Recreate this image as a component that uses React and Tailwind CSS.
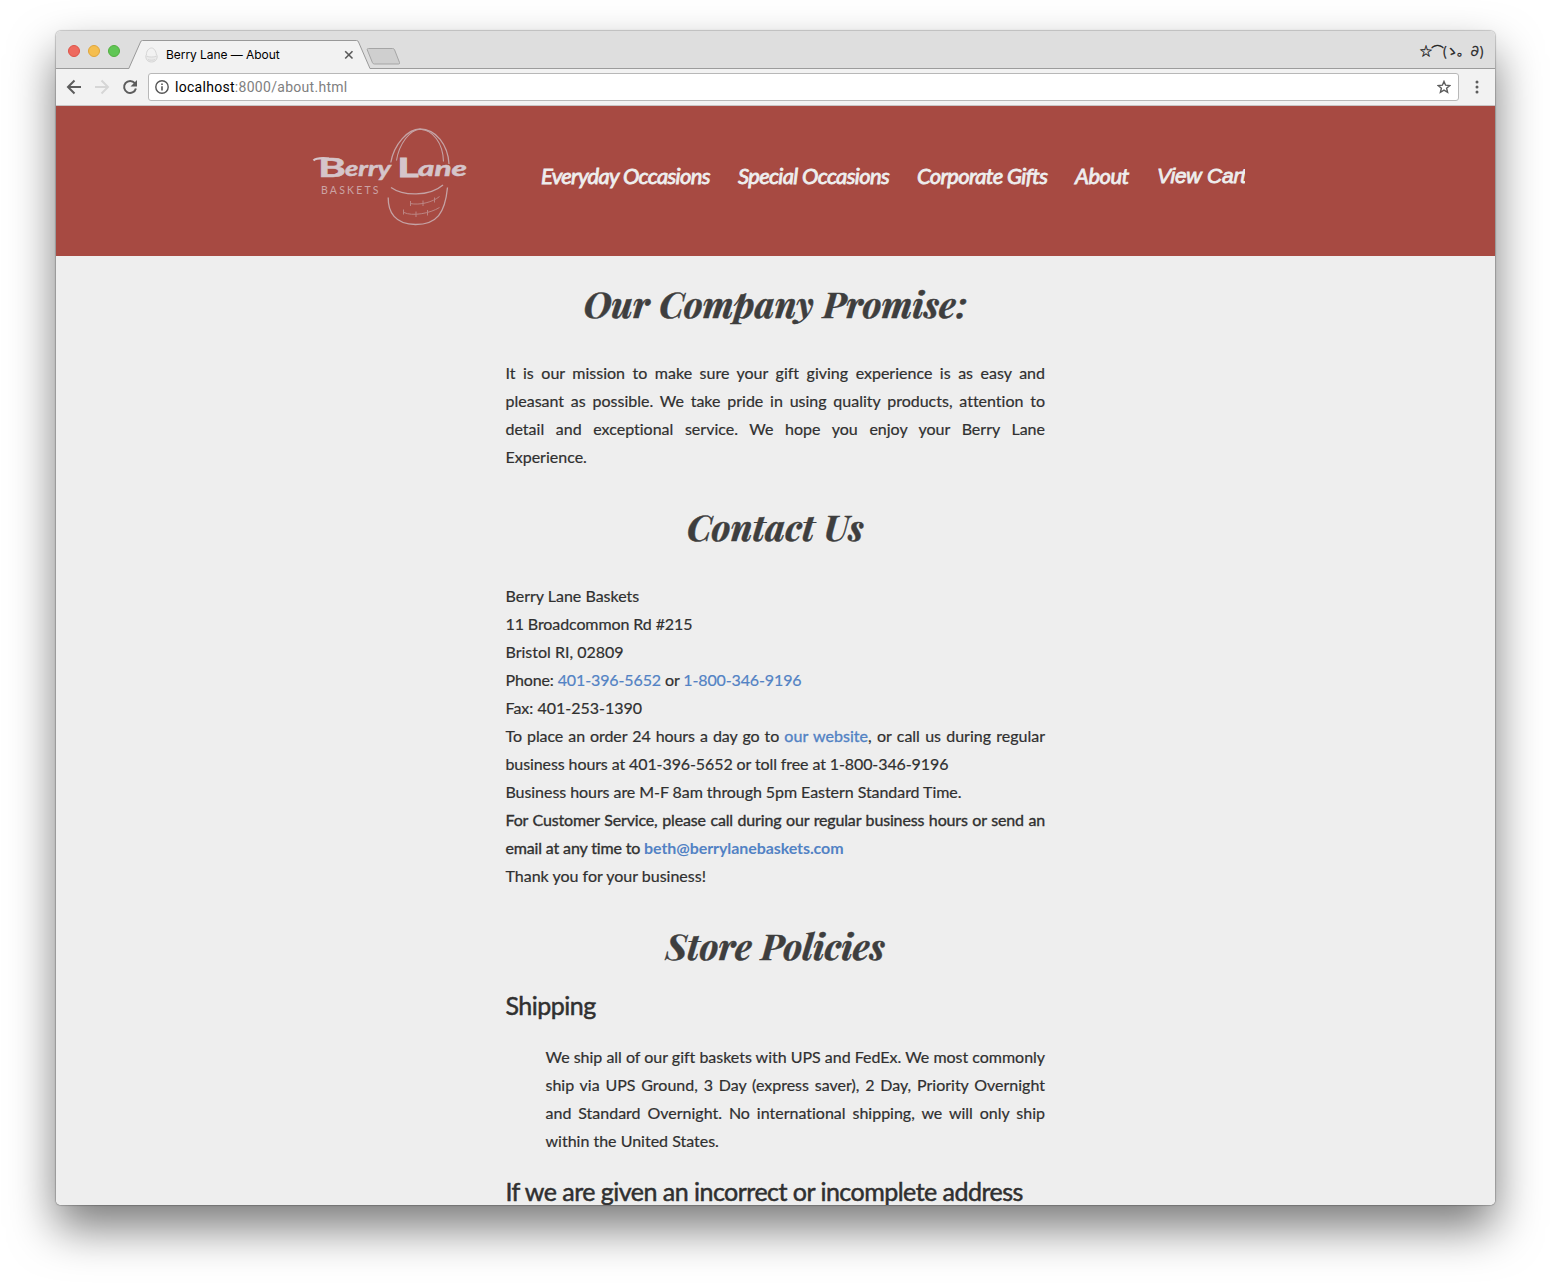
import React from "react";

const blue = "text-[#5282c4]";

function TitleBar() {
  return (
    <div className="relative flex h-[38px] items-start rounded-t-[5px] border-b border-[#9c9c9c] bg-[#dedede]">
      <div className="ml-3 mt-[14px] flex gap-2">
        <span className="size-3 rounded-full border border-[#de5347] bg-[#ee6a5f]" />
        <span className="size-3 rounded-full border border-[#e0a53a] bg-[#f5be4f]" />
        <span className="size-3 rounded-full border border-[#52ae3f] bg-[#60c655]" />
      </div>
      <div className="relative ml-2 h-[38px] w-[244px]">
        <svg className="absolute left-0 top-[9px]" width="244" height="29" viewBox="0 0 244 29" fill="none">
          <path d="M0 28.5 L1 28.5 L12.5 2 Q13 .5 14.5 .5 H228.500 Q230 .5 230.500 2 L242 28.500 L244 28.500 V29 H0Z" fill="#f2f2f2" />
          <path d="M0 28.5 H.8 L12.5 2 Q13 .5 14.5 .5 H228.500 Q230 .5 230.500 2 L242 28.500 H244" stroke="#999" />
        </svg>
        <div className="relative mt-[16px] flex h-4 items-center">
          <svg className="ml-[17px] mr-[8px]" width="13" height="16" viewBox="0 0 13 16" fill="none" stroke="#d6d6d6">
            <path d="M1.500 8C1 4 4 1 6.500 1S11 4 11.500 8" />
            <path d="M.8 8.500C3 10.500 10 10.500 12.200 8.500C12.500 12 10.500 15 6.500 15S.5 12 .8 8.500Z" fill="#eaeaea" />
            <path d="M3 12.500C5 13.500 8 13.500 10 12.500" />
          </svg>
          <span className="w-[178px] whitespace-nowrap font-[Inter] text-[12px] leading-4 tracking-[-0.05px] text-black">Berry Lane — About</span>
          <svg width="10" height="10" viewBox="0 0 10 10" stroke="#5a5a5a" strokeWidth="1.6">
            <path d="M1.200 1.200L8.500 8.500M8.500 1.200L1.200 8.500" />
          </svg>
        </div>
      </div>
      <svg className="-ml-[6px] mt-[16px]" width="36" height="18" viewBox="0 0 36 18">
        <path d="M2.500 1.500H26.500Q28 1.500 28.500 2.700L33.500 15.500Q34 17 32.500 17H8.500Q7 17 6.500 15.800L1.200 2.700Q1 1.500 2.500 1.500Z" fill="#cfcfcf" stroke="#a5a5a5" />
      </svg>
      <span className="ml-auto mr-[12px] mt-[12px] whitespace-nowrap text-[12.5px] leading-4 tracking-[-1.1px] text-[#222] [-webkit-text-stroke:0.3px_#222] font-['Noto_Sans_CJK_JP',sans-serif]">
        ☆⌒(ゝ。∂)
      </span>
    </div>
  );
}

function Toolbar() {
  return (
    <div className="flex h-[37px] items-center border-b border-[#c9c4c4] bg-[#f2f2f2]">
      <svg className="ml-[10px]" width="16" height="16" viewBox="0 0 16 16" fill="none" stroke="#5c5c5c" strokeWidth="2">
        <path d="M15 8H2.500M8.500 1.500L2 8L8.500 14.500" />
      </svg>
      <svg className="ml-[12px]" width="16" height="16" viewBox="0 0 16 16" fill="none" stroke="#d6d6d6" strokeWidth="2">
        <path d="M1 8H13.500M7.500 1.500L14 8L7.500 14.500" />
      </svg>
      <svg className="ml-[12px]" width="16" height="16" viewBox="0 0 16 16" fill="none" stroke="#5c5c5c" strokeWidth="2">
        <path d="M12.800 4.200A6 6 0 1 0 13.900 9.500" />
        <path d="M15 1V7.500H8.500Z" fill="#5c5c5c" stroke="none" />
      </svg>
      <div className="ml-[10px] flex h-7 w-[1311px] items-center rounded-[3px] border border-[#b8b8b8] bg-white">
        <svg className="ml-[6px]" width="14" height="14" viewBox="0 0 14 14" fill="none" stroke="#555" strokeWidth="1.400">
          <circle cx="7" cy="7" r="6.200" />
          <path d="M7 6.200V10.500M7 3.400V4.900" strokeWidth="1.600" />
        </svg>
        <span className="ml-[6px] whitespace-nowrap font-[Roboto] text-[14px] tracking-[0.29px] text-black">
          localhost<span className="text-[#808080]">:8000/about.html</span>
        </span>
        <svg className="ml-auto mr-[7px]" width="14" height="14" viewBox="0 0 14 14" fill="none" stroke="#5c5c5c" strokeWidth="1.400">
          <path d="M7 1.400L8.600 5.200L12.800 5.500L9.600 8.200L10.600 12.300L7 10.100L3.400 12.300L4.400 8.200L1.200 5.500L5.400 5.200Z" />
        </svg>
      </div>
      <svg className="ml-[16px]" width="4" height="14" viewBox="0 0 4 14" fill="#5c5c5c">
        <circle cx="2" cy="2" r="1.500" />
        <circle cx="2" cy="7" r="1.500" />
        <circle cx="2" cy="12" r="1.500" />
      </svg>
    </div>
  );
}

function Logo() {
  return (
    <svg className="shrink-0" width="180" height="120" viewBox="0 0 180 120" fill="none" stroke="#c5a3a5" strokeWidth="1.300">
      <path d="M90.800 47.500C94 29 108 14 120 14C136 14 148 30 149 49" />
      <path d="M96.500 45.500C99 29 110 14.500 120 14.200C133 15 143 28 143.500 46.500" strokeWidth="1.100" />
      <path d="M91 72.500C103 81 129 82 143 70" />
      <path d="M88.200 82.500C88 97 95 109.500 115.500 109.500C137 109.500 145 98 147.500 72.500" />
      <g stroke="#bc8583" strokeWidth="1">
        <path d="M110 88.500C120 90.500 133 87 139.500 81.500M110.500 86V91M123 85.500V91M134.500 82.500V87.500" />
        <path d="M104 97.500C112 101.500 130 98.500 139.500 92.500M103.500 94.500V99.500M116 96.500V102M127.500 95V100.500" />
      </g>
      <path d="M13.500 45.500C16 43 21 42.800 29 43.500" stroke="#d5c5ca" strokeWidth="2.200" />
      <g fill="#d5c5ca" stroke="#d5c5ca" strokeWidth=".5" className="font-[Lato] font-bold">
        <text x="18" y="61.500" fontSize="26" textLength="28" lengthAdjust="spacingAndGlyphs">B</text>
        <text x="45" y="61" fontSize="20" textLength="46" lengthAdjust="spacingAndGlyphs" className="italic">erry</text>
        <text x="97.500" y="61.500" fontSize="27" textLength="21" lengthAdjust="spacingAndGlyphs" strokeWidth="1">L</text>
        <text x="118" y="61" fontSize="20" textLength="49" lengthAdjust="spacingAndGlyphs" className="italic">ane</text>
      </g>
      <text x="21" y="78.800" fontSize="10.500" textLength="57.500" fill="#cba3a4" stroke="none" className="font-[Lato]">BASKETS</text>
    </svg>
  );
}

function Header() {
  const item = "shrink-0 whitespace-nowrap";
  return (
    <header className="flex h-[150px] bg-[#a74a42] pl-[244px] pt-[9px]">
      <Logo />
      <nav className="ml-[61px] mt-[46px] flex h-[30px] font-[Lato] text-[22px] font-normal italic leading-[30px] tracking-[-0.67px] text-[#eee] [-webkit-text-stroke:0.8px_#eee]">
        <a className={item + " w-[197px]"}>Everyday Occasions</a>
        <a className={item + " w-[179px]"}>Special Occasions</a>
        <a className={item + " w-[158px]"}>Corporate Gifts</a>
        <a className={item + " w-[82px] tracking-[-0.5px]"}>About</a>
        <a className="w-[88px] shrink-0 overflow-hidden whitespace-nowrap font-['Liberation_Sans'] text-[21px] tracking-[-0.2px]">View Cart</a>
      </nav>
    </header>
  );
}

function Title({ children, className }) {
  return (
    <h2 className={"h-[46px] whitespace-nowrap text-center font-['Playfair_Display','Liberation_Serif',serif] text-[36px] font-bold italic leading-[44px] text-[#3e3e3e] [-webkit-text-stroke:0.5px_#3e3e3e] " + className}>
      {children}
    </h2>
  );
}

function Full({ children, className = "" }) {
  return <p className={"whitespace-nowrap [text-align-last:justify] " + className}>{children}</p>;
}

function Main() {
  return (
    <main className="min-h-0 flex-1 overflow-hidden rounded-b-[5px] bg-[#eee] pt-[25px]">
      <div className="ml-[449.5px] w-[539.5px] font-[Lato] text-[16px] leading-7 text-[#303030] [font-variant-ligatures:none] [-webkit-text-stroke:0.2px_currentColor]">
        <Title className="mb-[32px]">Our Company Promise:</Title>
        <Full>It is our mission to make sure your gift giving experience is as easy and</Full>
        <Full>pleasant as possible. We take pride in using quality products, attention to</Full>
        <Full>detail and exceptional service. We hope you enjoy your Berry Lane</Full>
        <p>Experience.</p>

        <Title className="mb-[32px] mt-[33px]">Contact Us</Title>
        <p>Berry Lane Baskets</p>
        <p className="tracking-[-0.1px]">11 Broadcommon Rd #215</p>
        <p>Bristol RI, 02809</p>
        <p className="tracking-[-0.12px]">
          Phone: <a className={blue}>401-396-5652</a> or <a className={blue}>1-800-346-9196</a>
        </p>
        <p>Fax: 401-253-1390</p>
        <Full>
          <span className="tracking-[-0.1px]">To place an order 24 hours a day go to </span><a className={"tracking-[0.05px] [-webkit-text-stroke:0.35px_currentColor] " + blue}>our website</a>, or call us during regular
        </Full>
        <p className="tracking-[-0.1px]">business hours at 401-396-5652 or toll free at 1-800-346-9196</p>
        <p className="tracking-[-0.06px]">Business hours are M-F 8am through 5pm Eastern Standard Time.</p>
        <Full className="tracking-[-0.15px] [-webkit-text-stroke:0.35px_currentColor]">
          For Customer Service, please call during our regular business hours or send an
        </Full>
        <p className="tracking-[-0.15px] [-webkit-text-stroke:0.35px_currentColor]">
          email at any time to <a className={"font-bold tracking-[-0.08px] [-webkit-text-stroke:0px] " + blue}>beth@berrylanebaskets.com</a>
        </p>
        <p>Thank you for your business!</p>

        <Title className="mt-[33px]">Store Policies</Title>
        <h3 className="mt-[22px] text-[25px] leading-7 tracking-[-0.52px] [-webkit-text-stroke:0.5px_currentColor]">Shipping</h3>
        <div className="ml-10 mt-[24px]">
          <Full className="tracking-[-0.03px]">We ship all of our gift baskets with UPS and FedEx. We most commonly</Full>
          <Full>ship via UPS Ground, 3 Day (express saver), 2 Day, Priority Overnight</Full>
          <Full>and Standard Overnight. No international shipping, we will only ship</Full>
          <p>within the United States.</p>
        </div>
        <h3 className="mt-[22px] whitespace-nowrap text-[25px] leading-7 tracking-[-0.52px] [-webkit-text-stroke:0.5px_currentColor]">
          If we are given an incorrect or incomplete address
        </h3>
      </div>
    </main>
  );
}

export default function App() {
  return (
    <div className="h-[1285px] w-[1551px] overflow-hidden bg-white pl-[56px] pt-[31px]">
      <div className="flex h-[1174px] w-[1439px] flex-col rounded-[5px] shadow-[0_0_1px_1px_rgba(0,0,0,0.2),0_23px_46px_rgba(0,0,0,0.52)]">
        <TitleBar />
        <Toolbar />
        <Header />
        <Main />
      </div>
    </div>
  );
}
